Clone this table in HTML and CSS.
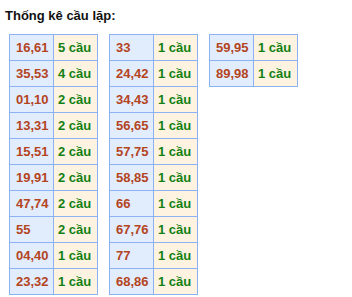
FILE: index.html
```html
<!DOCTYPE html>
<html>
<head>
<meta charset="utf-8">
<link rel="stylesheet" href="styles.css">
</head>
<body>
<div class="box">
  <h3 class="title">Thống kê cầu lặp:</h3>
  <div class="tables">
    <table class="grid">
      <tr><td class="num">16,61</td><td class="cnt">5 cầu</td></tr>
      <tr><td class="num">35,53</td><td class="cnt">4 cầu</td></tr>
      <tr><td class="num">01,10</td><td class="cnt">2 cầu</td></tr>
      <tr><td class="num">13,31</td><td class="cnt">2 cầu</td></tr>
      <tr><td class="num">15,51</td><td class="cnt">2 cầu</td></tr>
      <tr><td class="num">19,91</td><td class="cnt">2 cầu</td></tr>
      <tr><td class="num">47,74</td><td class="cnt">2 cầu</td></tr>
      <tr><td class="num">55</td><td class="cnt">2 cầu</td></tr>
      <tr><td class="num">04,40</td><td class="cnt">1 cầu</td></tr>
      <tr><td class="num">23,32</td><td class="cnt">1 cầu</td></tr>
    </table>
    <table class="grid">
      <tr><td class="num">33</td><td class="cnt">1 cầu</td></tr>
      <tr><td class="num">24,42</td><td class="cnt">1 cầu</td></tr>
      <tr><td class="num">34,43</td><td class="cnt">1 cầu</td></tr>
      <tr><td class="num">56,65</td><td class="cnt">1 cầu</td></tr>
      <tr><td class="num">57,75</td><td class="cnt">1 cầu</td></tr>
      <tr><td class="num">58,85</td><td class="cnt">1 cầu</td></tr>
      <tr><td class="num">66</td><td class="cnt">1 cầu</td></tr>
      <tr><td class="num">67,76</td><td class="cnt">1 cầu</td></tr>
      <tr><td class="num">77</td><td class="cnt">1 cầu</td></tr>
      <tr><td class="num">68,86</td><td class="cnt">1 cầu</td></tr>
    </table>
    <table class="grid">
      <tr><td class="num">59,95</td><td class="cnt">1 cầu</td></tr>
      <tr><td class="num">89,98</td><td class="cnt">1 cầu</td></tr>
    </table>
  </div>
</div>
</body>
</html>
```

FILE: styles.css
```css
html, body {
  margin: 0;
  padding: 0;
  background: #ffffff;
}
body {
  font-family: Arial, "Liberation Sans", sans-serif;
}
.box {
  padding: 8px 0 0 5px;
}
.title {
  margin: 0;
  font-size: 13px;
  font-weight: bold;
  color: #111111;
  line-height: 16px;
}
.tables {
  display: flex;
  align-items: flex-start;
  gap: 11px;
  margin: 10px 0 0 4px;
}
.grid {
  border-collapse: collapse;
  table-layout: fixed;
  width: 88px;
}
.grid td {
  border: 1px solid #8db2f3;
  height: 26px;
  padding: 0;
  font-size: 13px;
  line-height: 15px;
  white-space: nowrap;
  box-sizing: border-box;
}
.num {
  width: 44px;
  background: #e1ecfd;
  color: #b4441e;
  font-weight: bold;
  padding-left: 6px !important;
}
.cnt {
  width: 44px;
  background: #fef3e0;
  color: #138013;
  font-weight: bold;
  padding-left: 4px !important;
}
```
